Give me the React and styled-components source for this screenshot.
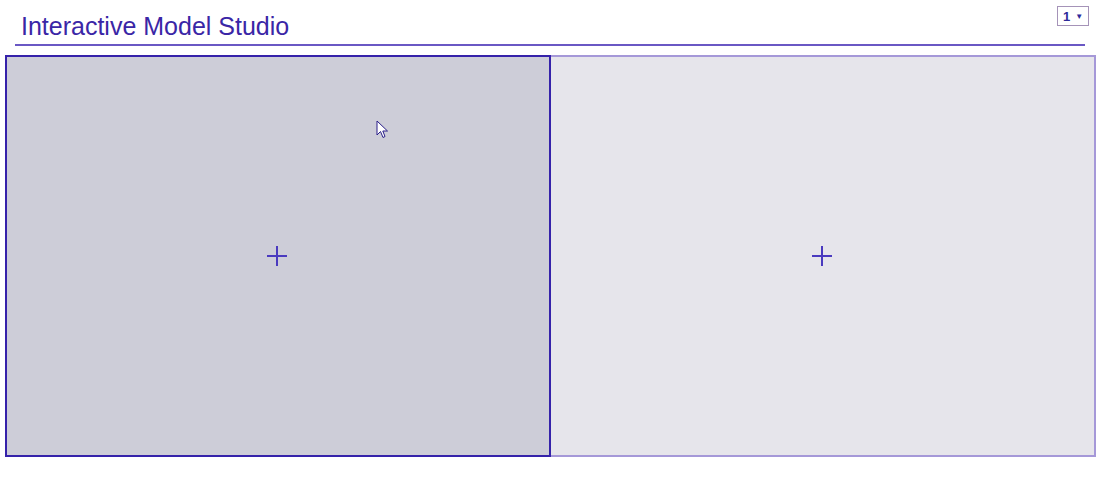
import styled, { createGlobalStyle } from 'styled-components';

const GlobalStyle = createGlobalStyle`
  html, body {
    margin: 0;
    padding: 0;
    background: #ffffff;
    font-family: 'Liberation Sans', Arial, sans-serif;
  }
`;

const Page = styled.div`
  width: 1100px;
  height: 480px;
  padding: 0 4px 0 5px;
  box-sizing: border-box;
`;

const Header = styled.div`
  position: relative;
  margin: 0 11px 0 10px;
  height: 44px;
  border-bottom: 2px solid #6a58c4;
  display: flex;
  align-items: flex-end;
`;

const Title = styled.h1`
  margin: 0 0 4px 6px;
  font-size: 25px;
  font-weight: normal;
  line-height: 28px;
  color: #3a26a6;
`;

const PageSelect = styled.div`
  position: absolute;
  top: 6px;
  right: -4px;
  width: 32px;
  height: 20px;
  box-sizing: border-box;
  border: 1px solid #a593b8;
  display: flex;
  align-items: center;
  justify-content: center;
  gap: 5px;
  font-size: 13px;
  font-weight: bold;
  color: #2e2a9a;
`;

const Caret = styled.span`
  font-size: 8px;
  color: #2e2a9a;
`;

const Panels = styled.div`
  margin-top: 9px;
  display: grid;
  grid-template-columns: 546px 545px;
`;

const Panel = styled.div`
  position: relative;
  height: 402px;
  box-sizing: border-box;
  background: ${(props) => (props.active ? '#cdcdd8' : '#e6e5eb')};
  border: 2px solid ${(props) => (props.active ? '#3522aa' : '#a598d8')};
  border-left: ${(props) => (props.active ? '2px solid #3522aa' : 'none')};
  display: flex;
  align-items: center;
  justify-content: center;
`;

const Cursor = styled.svg`
  position: absolute;
  left: 369px;
  top: 63px;
`;

function Plus() {
  return (
    <svg width="20" height="20" viewBox="0 0 20 20" style={{ marginLeft: -2 }}>
      <line x1="10" y1="0" x2="10" y2="20" stroke="#4a3abf" strokeWidth="2" />
      <line x1="0" y1="10" x2="20" y2="10" stroke="#4a3abf" strokeWidth="2" />
    </svg>
  );
}

export default function App() {
  return (
    <Page>
      <GlobalStyle />
      <Header>
        <Title>Interactive Model Studio</Title>
        <PageSelect>
          1<Caret>▼</Caret>
        </PageSelect>
      </Header>
      <Panels>
        <Panel active>
          <Plus />
          <Cursor width="14" height="20" viewBox="0 0 14 20">
            <path
              d="M1 1 L1 15 L4.5 11.5 L7 17.5 L9 16.5 L6.8 11 L11.5 11 Z"
              fill="#ffffff"
              stroke="#2a1f8a"
              strokeWidth="1"
              strokeLinejoin="round"
            />
          </Cursor>
        </Panel>
        <Panel>
          <Plus />
        </Panel>
      </Panels>
    </Page>
  );
}
